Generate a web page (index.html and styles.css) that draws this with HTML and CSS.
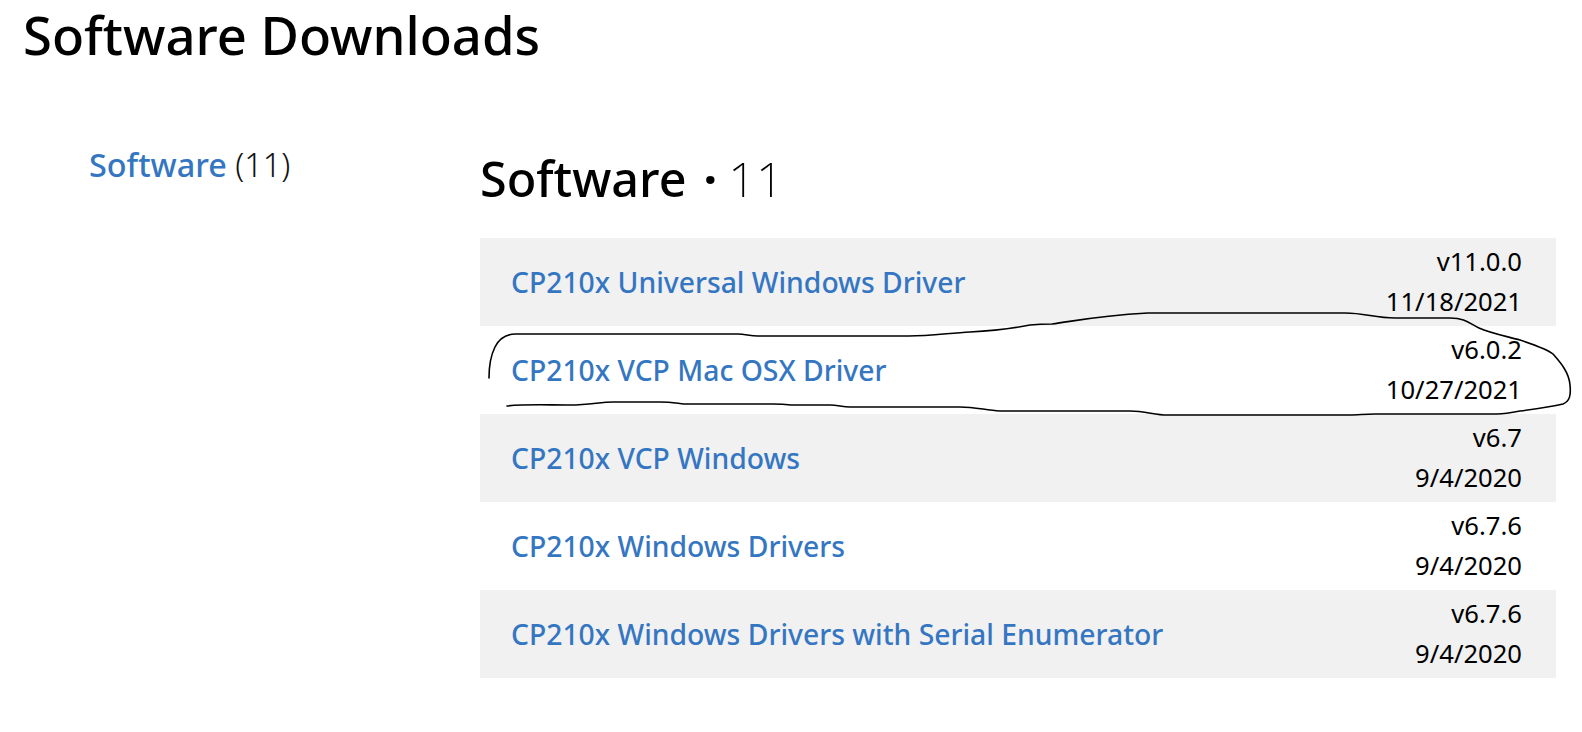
FILE: index.html
```html
<!DOCTYPE html>
<html lang="en">
<head>
<meta charset="utf-8">
<title>Software Downloads</title>
<link rel="stylesheet" href="styles.css">
</head>
<body>
<h1 class="title">Software Downloads</h1>
<div class="layout">
  <aside class="side"><a class="side-link" href="#">Software</a> <span class="side-count">(11)</span></aside>
  <main class="main">
    <h2 class="heading">Software <span class="dot">·</span> <span class="count">11</span></h2>
    <ul class="list">
      <li class="row"><a class="row-link" href="#">CP210x Universal Windows Driver</a><div class="meta"><div>v11.0.0</div><div>11/18/2021</div></div></li>
      <li class="row"><a class="row-link" href="#">CP210x VCP Mac OSX Driver</a><div class="meta"><div>v6.0.2</div><div>10/27/2021</div></div></li>
      <li class="row"><a class="row-link" href="#">CP210x VCP Windows</a><div class="meta"><div>v6.7</div><div>9/4/2020</div></div></li>
      <li class="row"><a class="row-link" href="#">CP210x Windows Drivers</a><div class="meta"><div>v6.7.6</div><div>9/4/2020</div></div></li>
      <li class="row"><a class="row-link" href="#">CP210x Windows Drivers with Serial Enumerator</a><div class="meta"><div>v6.7.6</div><div>9/4/2020</div></div></li>
    </ul>
  </main>
</div>
<svg class="scribble" width="1582" height="732" viewBox="0 0 1582 732" aria-hidden="true">
  <path d="M489 378C489 365 491 355 495 347C499 339 505 334 516 334L738 334C745 334 750 336 758 336L909 336C930 336 950 333 970 332C990 331 1010 329 1030 325C1040 324 1046 324 1052 324C1075 321 1095 316 1148 313C1170 313 1300 313 1345 313C1365 313 1375 318 1395 318L1450 318C1466 318 1470 324 1479 328C1490 333 1505 336 1520 340C1535 345 1547 349 1553 354C1560 362 1569 372 1570 385C1571 395 1570 401 1563 404C1550 407 1535 409 1520 411C1510 413 1505 414 1497 414L1375 414C1365 414 1358 415 1350 415L1167 415C1155 415 1145 411 1130 411L1000 411C985 410 975 407 960 407L850 407C842 407 838 405 830 405L791 405C783 404 780 404 773 404L684 404C675 403 670 402 660 402L613 402C600 402 590 405 570 405C545 405 525 404 507 406"/>
</svg>
</body>
</html>
```

FILE: styles.css
```css
* { box-sizing: border-box; }
html, body { margin: 0; padding: 0; }
body {
  position: relative;
  width: 1582px;
  height: 732px;
  overflow: hidden;
  background: #fff;
  color: #000;
  font-family: "Noto Sans", "Open Sans", sans-serif;
}
a { color: #3576c2; text-decoration: none; }
.title {
  margin: 0;
  padding: 3px 0 0 23px;
  height: 150px;
  font-size: 52.6px;
  line-height: 64px;
  font-weight: 500;
}
.layout { display: grid; grid-template-columns: 480px 1076px; }
.side { padding: 0 0 0 89px; font-size: 32.4px; line-height: 28px; }
.side-link { font-weight: 500; }
.side-count { font-weight: 300; color: #111; }
.heading { margin: 0; height: 88px; font-size: 48.5px; line-height: 56px; font-weight: 500; word-spacing: 1.5px; }
.dot { font-weight: 700; margin: 0 -3px 0 3px; }
.count { font-weight: 200; }
.list { margin: 0; padding: 0; list-style: none; }
.row {
  display: flex;
  align-items: center;
  justify-content: space-between;
  height: 88px;
  padding: 0 34px 1px 31px;
}
.row:nth-child(odd) { background: #f1f1f1; }
.row-link { font-size: 28.3px; font-weight: 500; }
.meta { padding-top: 1px; text-align: right; font-size: 25.6px; line-height: 40.5px; }
.scribble { position: absolute; left: 0; top: 0; pointer-events: none; }
.scribble path { fill: none; stroke: #000; stroke-width: 1.6; stroke-linecap: round; stroke-linejoin: round; }
```
